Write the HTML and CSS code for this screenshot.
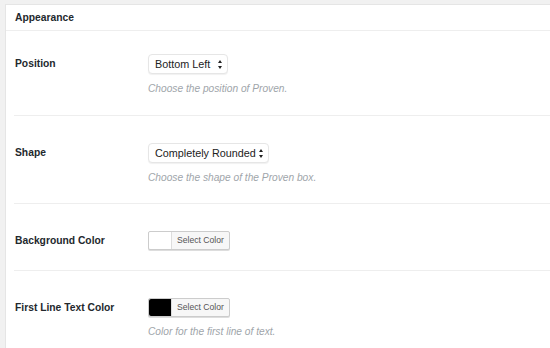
FILE: index.html
```html
<!DOCTYPE html>
<html>
<head>
  <meta charset="UTF-8">
  <title>Appearance</title>
  <link rel="stylesheet" href="styles.css">
</head>
<body>
  <div class="postbox">
    <h2 class="hndle">Appearance</h2>
    <div class="inside">
      <div class="form-row first">
        <div class="label">Position</div>
        <div class="field">
          <div class="select">Bottom Left<span class="arrows"></span></div>
          <p class="description">Choose the position of Proven.</p>
        </div>
      </div>
      <div class="form-row">
        <div class="label">Shape</div>
        <div class="field">
          <div class="select">Completely Rounded<span class="arrows tight"></span></div>
          <p class="description">Choose the shape of the Proven box.</p>
        </div>
      </div>
      <div class="form-row">
        <div class="label">Background Color</div>
        <div class="field">
          <div class="color-picker">
            <span class="swatch"></span>
            <span class="pick-btn">Select Color</span>
          </div>
        </div>
      </div>
      <div class="form-row last">
        <div class="label">First Line Text Color</div>
        <div class="field">
          <div class="color-picker">
            <span class="swatch dark"></span>
            <span class="pick-btn">Select Color</span>
          </div>
          <p class="description">Color for the first line of text.</p>
        </div>
      </div>
    </div>
  </div>
</body>
</html>
```

FILE: styles.css
```css
body {
  font-family: "Liberation Sans", Arial, Helvetica, sans-serif;
  margin: 0;
  padding: 4px 0 0 5px;
  background-color: #f1f1f1;
  color: #23282d;
  overflow: hidden;
}
.postbox {
  background-color: #fff;
  border: 1px solid #e5e5e5;
  border-right: none;
  height: 400px;
}
.hndle {
  margin: 0;
  font-size: 10.3px;
  font-weight: bold;
  line-height: 25px;
  padding: 0 9px;
  border-bottom: 1px solid #eeeeee;
}
.inside {
  padding: 0 0 0 8px;
}
.form-row {
  display: flex;
  padding: 27px 0 19px 1px;
  border-bottom: 1px solid #eeeeee;
}
.form-row.first {
  padding-top: 23px;
  padding-bottom: 20px;
}
.form-row.last {
  border-bottom: none;
}
.label {
  width: 133px;
  font-size: 10.3px;
  font-weight: bold;
  line-height: 20px;
  color: #23282d;
}
.field {
  display: flex;
  flex-direction: column;
  align-items: flex-start;
  min-height: 20px;
}
.select {
  display: flex;
  align-items: center;
  height: 20px;
  box-sizing: border-box;
  padding: 0 4px 0 6px;
  border: 1px solid #e6e6e6;
  border-radius: 4px;
  box-shadow: 0 1px 1px rgba(0, 0, 0, 0.06);
  font-size: 10.8px;
  color: #222;
  background: #fff;
}
.arrows {
  display: block;
  width: 5px;
  height: 9px;
  margin-left: 8px;
  position: relative;
}
.arrows.tight {
  margin-left: 3px;
}
.arrows::before,
.arrows::after {
  content: "";
  position: absolute;
  left: 0;
  border-left: 2.5px solid transparent;
  border-right: 2.5px solid transparent;
}
.arrows::before {
  top: 0;
  border-bottom: 3.5px solid #222;
}
.arrows::after {
  bottom: 0;
  border-top: 3.5px solid #222;
}
.description {
  margin: 8px 0 0;
  font-size: 10.2px;
  font-style: italic;
  line-height: 13px;
  color: #a0a5aa;
}
.color-picker {
  display: flex;
  height: 19px;
  box-sizing: border-box;
  border: 1px solid #ccc;
  border-radius: 2px;
  box-shadow: 0 1px 0 #ddd;
  background: #f7f7f7;
}
.swatch {
  width: 22px;
  background: #fff;
  border-right: 1px solid #ddd;
  border-radius: 2px 0 0 2px;
}
.swatch.dark {
  background: #000;
}
.pick-btn {
  padding: 0 5px;
  font-size: 8.6px;
  line-height: 17px;
  color: #555;
}
```
